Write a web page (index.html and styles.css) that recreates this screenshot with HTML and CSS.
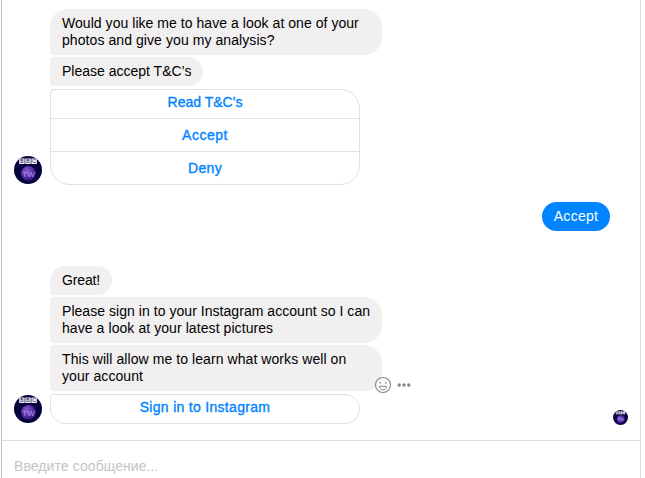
FILE: index.html
```html
<!DOCTYPE html>
<html lang="ru">
<head>
<meta charset="utf-8">
<title>Chat</title>
<link rel="stylesheet" href="styles.css">
</head>
<body>
<svg class="defs" width="0" height="0" aria-hidden="true">
  <defs>
    <radialGradient id="orb" cx="40%" cy="35%" r="65%">
      <stop offset="0" stop-color="#8660d2"/>
      <stop offset="0.55" stop-color="#5932a8"/>
      <stop offset="1" stop-color="#29126e"/>
    </radialGradient>
    <symbol id="avatar" viewBox="0 0 28 28">
      <circle cx="14" cy="14" r="14" fill="#08023f"/>
      <circle cx="14.5" cy="17.5" r="7.5" fill="url(#orb)"/>
      <path d="M5.200 2.500h5.400v5.500h-5.400zM11.300 2.500h5.400v5.500h-5.400zM17.400 2.500h5.400v5.500h-5.400z" fill="#f1effa"/>
      <g class="logo-text" text-anchor="middle">
        <text x="7.900" y="7" font-size="5" fill="#08023f">B</text>
        <text x="14" y="7" font-size="5" fill="#08023f">B</text>
        <text x="20.100" y="7" font-size="5" fill="#08023f">C</text>
        <text x="14.500" y="20.500" font-size="8" fill="#b79ae8">TW</text>
      </g>
    </symbol>
  </defs>
</svg>
<main class="chat">
  <section class="thread">
    <div class="group">
      <svg class="avatar"><use href="#avatar"/></svg>
      <div class="stack">
        <p class="bubble first full"><span class="track-s">Would you like me to have a look at one of your</span><br><span class="track-m">photos and give you my analysis?</span></p>
        <p class="bubble">Please accept T&amp;C’s</p>
        <div class="menu">
          <a class="option">Read T&amp;C's</a>
          <a class="option track-xl">Accept</a>
          <a class="option track-l">Deny</a>
        </div>
      </div>
    </div>
    <p class="reply track-l">Accept</p>
    <div class="group">
      <svg class="avatar"><use href="#avatar"/></svg>
      <div class="stack">
        <p class="bubble first track-tight">Great!</p>
        <p class="bubble full"><span class="track-s">Please sign in to your Instagram account so I can</span><br><span class="track-m">have a look at your latest pictures</span></p>
        <div class="bubble full last"><span class="track-m">This will allow me to learn what works well on</span><br><span class="track-m">your account</span>
          <svg class="actions" width="38" height="18" viewBox="0 0 38 18" fill="none" stroke="#7f858d">
            <circle cx="9" cy="9" r="7.500" fill="#fff" fill-opacity=".65" stroke-width="1.100"/>
            <path d="M5.300 10.300h7.400c-.2 2.300-1.700 3.600-3.700 3.600s-3.500-1.300-3.700-3.600z" stroke-width="1"/>
            <g fill="#7f858d" stroke="none">
              <circle cx="6.200" cy="6.800" r=".9"/><circle cx="11.800" cy="6.800" r=".9"/>
              <circle cx="25.200" cy="9" r="1.700"/><circle cx="30" cy="9" r="1.700"/><circle cx="34.800" cy="9" r="1.700"/>
            </g>
          </svg>
        </div>
        <div class="menu">
          <a class="option track-l">Sign in to Instagram</a>
        </div>
      </div>
      <svg class="seen"><use href="#avatar"/></svg>
    </div>
  </section>
  <footer class="composer">Введите сообщение...</footer>
</main>
</body>
</html>
```

FILE: styles.css
```css
* { box-sizing: border-box; }
body {
  margin: 0;
  background: #fff;
  color: #000;
  font: 14px/17px "Liberation Sans", Arial, sans-serif;
}
p { margin: 0; }
.defs { display: block; position: absolute; }
.logo-text { font-family: "Liberation Sans", sans-serif; }
.chat {
  width: 640px;
  height: 478px;
  margin-left: 1px;
  border-left: 1px solid #bfc1c4;
  border-right: 1px solid #dcdcdc;
  overflow: hidden;
}
.thread {
  height: 441px;
  padding: 9px 12px 0;
  border-bottom: 1px solid #dcdcdc;
}
.group { display: flex; align-items: flex-end; }
.avatar { width: 28px; height: 28px; margin: 0 8px 1px 0; flex: none; }
.stack {
  display: flex;
  flex-direction: column;
  align-items: flex-start;
  gap: 2px;
}
.bubble {
  padding: 6px 12px;
  background: #f1eff0;
  border-radius: 4px 16px 16px 4px;
  white-space: nowrap;
}
.first { border-top-left-radius: 16px; }
.full { width: 332px; border-radius: 4px 18px 18px 4px; }
.first.full { border-top-left-radius: 18px; }
.last { position: relative; }
.actions { position: absolute; left: 324px; top: 31px; }
.track-tight { letter-spacing: -.15px; }
.track-s { letter-spacing: .045px; }
.track-m { letter-spacing: .075px; }
.track-l { letter-spacing: .3px; }
.track-xl { letter-spacing: .5px; }
.menu {
  width: 310px;
  margin-top: 1px;
  border: 1px solid #e0e0e0;
  border-radius: 4px 20px 20px 20px;
}
.option {
  display: block;
  height: 33px;
  padding: 8px 0;
  border-top: 1px solid #e0e0e0;
  color: #0084ff;
  text-align: center;
  -webkit-text-stroke: .35px #0084ff;
}
.option:first-child { height: 28px; padding: 4px 0 7px; border-top: 0; }
.reply {
  width: 68px;
  margin: 17px 18px 35px auto;
  padding: 6px 0;
  border-radius: 15px;
  background: #0084ff;
  color: #fff;
  text-align: center;
}
.seen { width: 15px; height: 15px; margin: 0 0 -1px auto; }
.composer { padding: 17px 12px; color: #c4c4c4; letter-spacing: .08px; }
```
